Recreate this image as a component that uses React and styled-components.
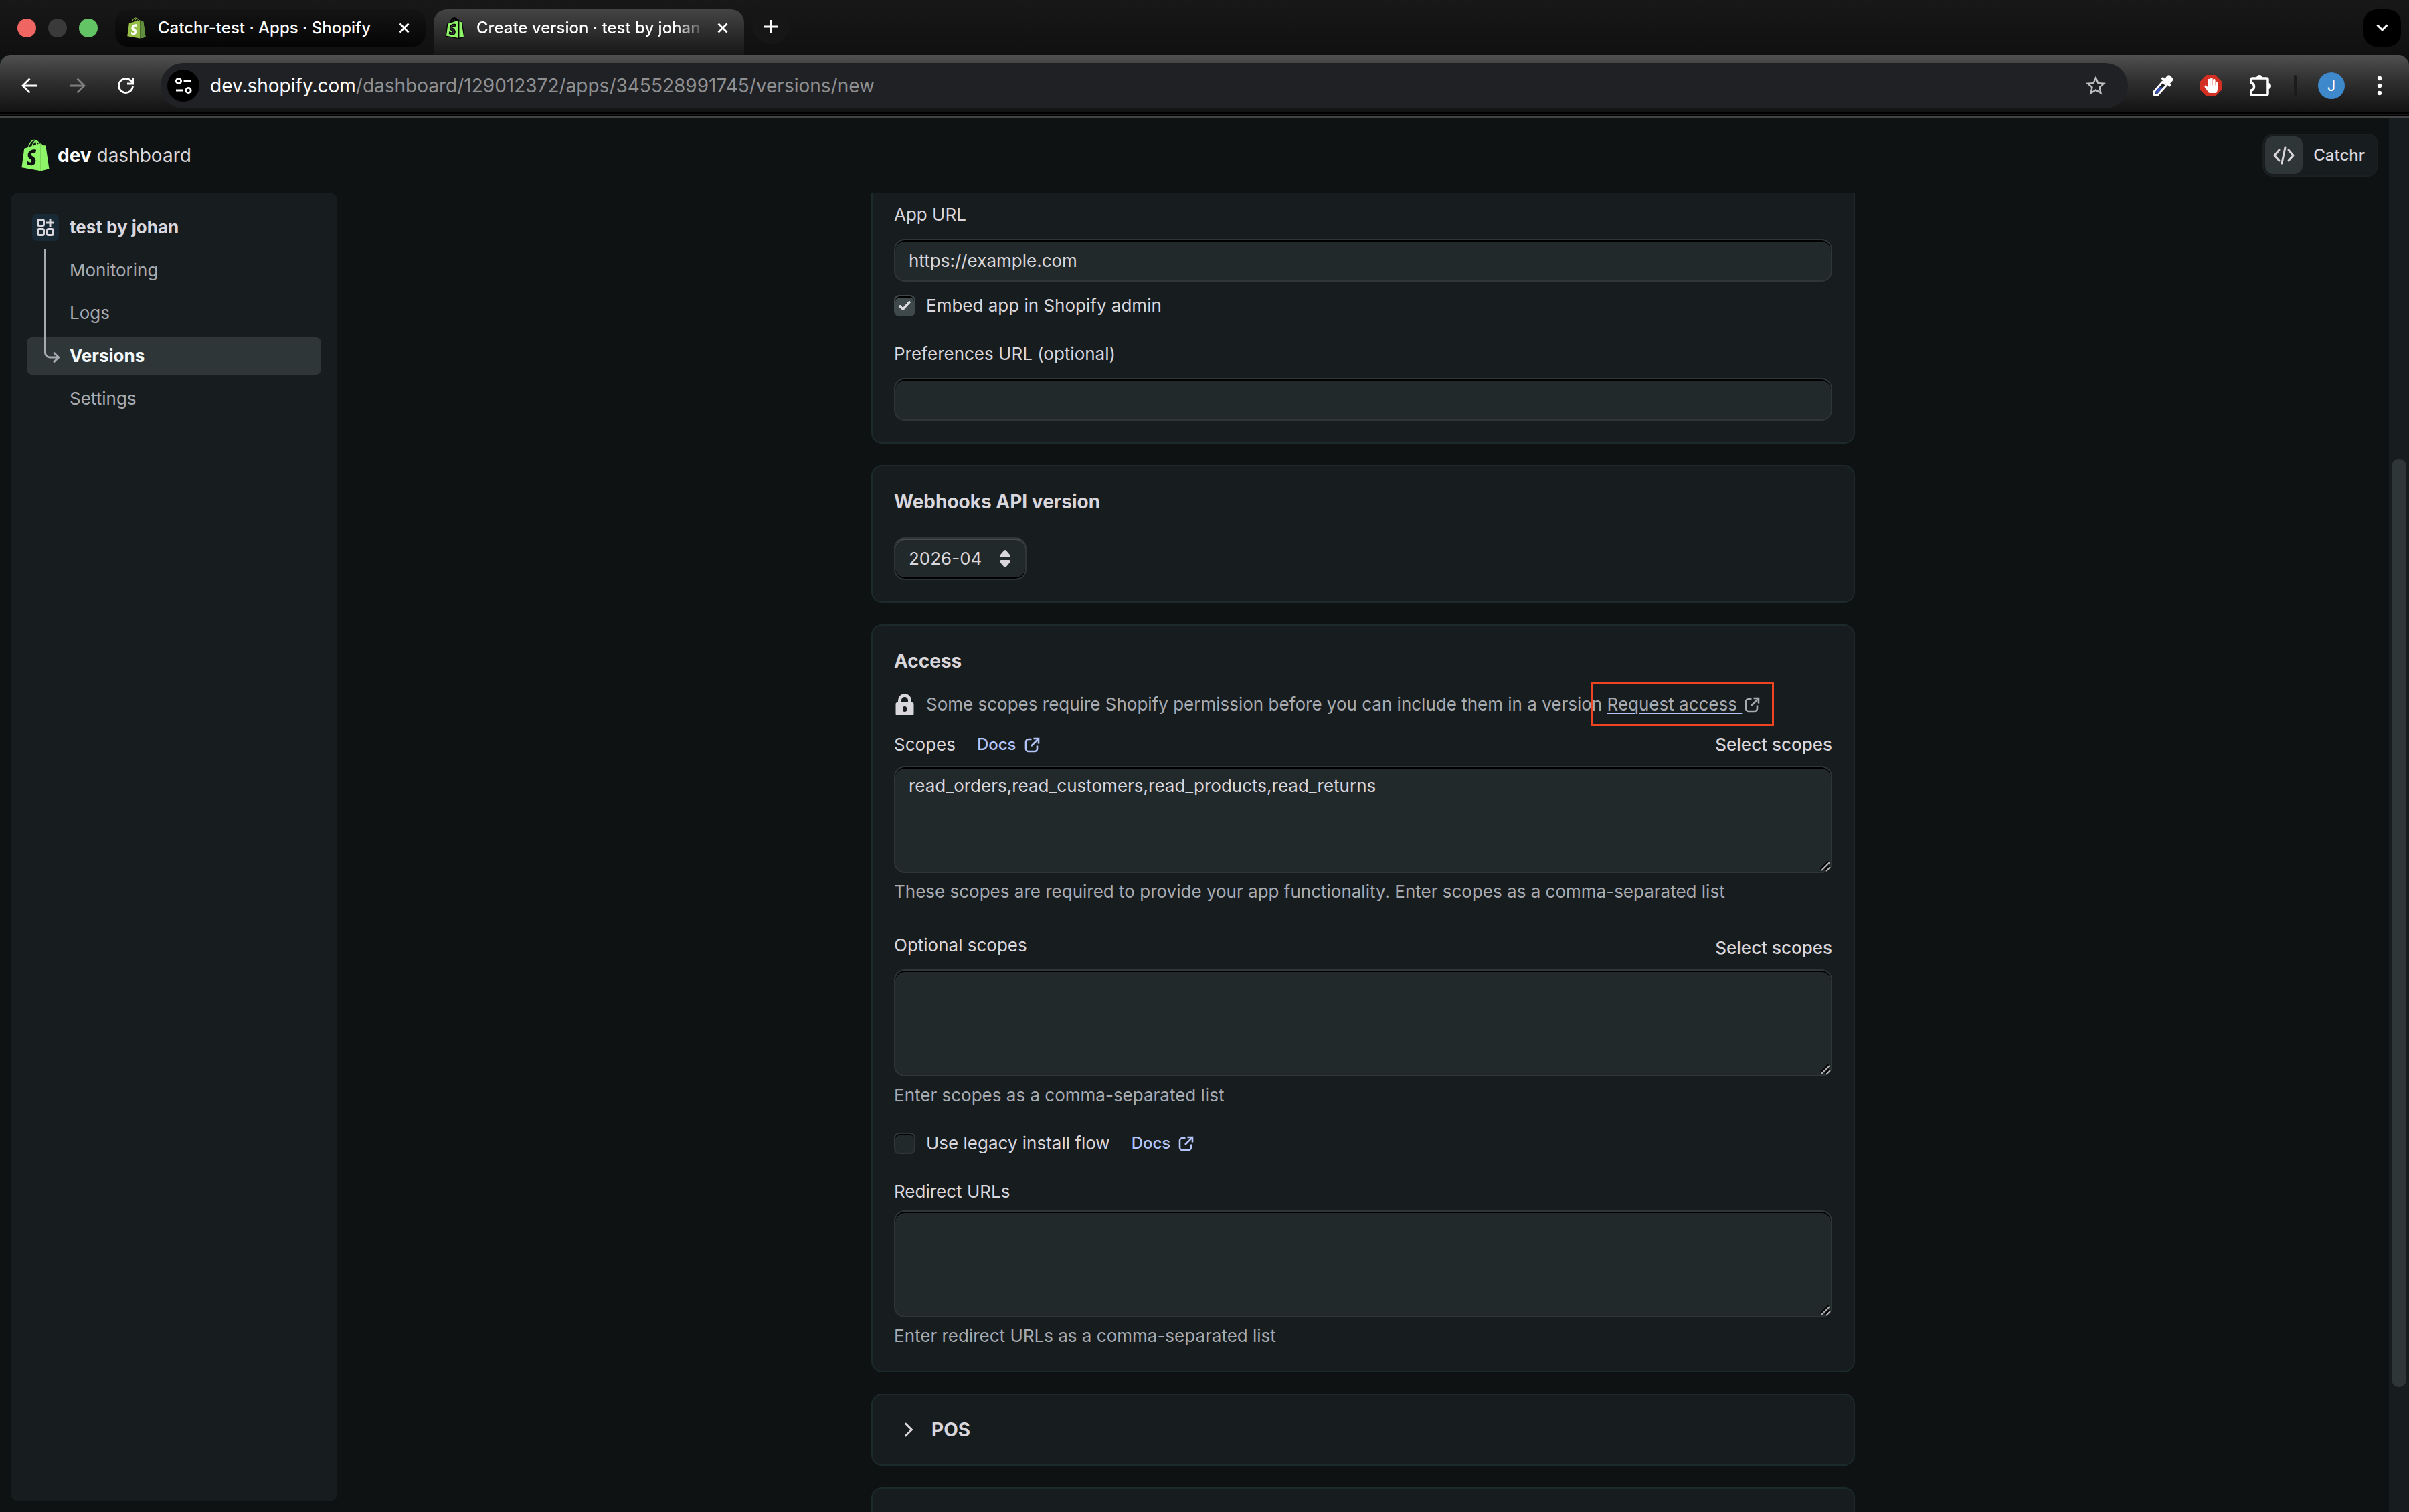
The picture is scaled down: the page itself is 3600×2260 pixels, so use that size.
import React from "react";
import styled, { createGlobalStyle, ThemeProvider } from "styled-components";
import { FaShopify, FaHandPaper } from "react-icons/fa";
import { MdStarBorder } from "react-icons/md";

const theme = {
  bg: "#0e1213",
  surface: "#171c1f",
  surfaceBorder: "#1c2a2c",
  field: "#22292b",
  fieldBorder: "#2f3638",
  active: "#2f3638",
  text: "#d9d6dc",
  textMuted: "#a7abb1",
  link: "#b4c5fb",
  brand: "#8ef468",
  highlight: "#ee4423",
};

const navItems = ["Monitoring", "Logs", "Versions", "Settings"];

function ExternalIcon() {
  return (
    <svg width="24" height="24" viewBox="0 0 24 24" fill="none" stroke="currentColor" strokeWidth="2.6" aria-hidden="true">
      <path d="M10.500 4H6a4 4 0 0 0-4 4v10a4 4 0 0 0 4 4h9a4 4 0 0 0 4-4v-4.500" />
      <path d="M13.500 3H21v7.500" />
      <path d="M21 3 10 14" />
    </svg>
  );
}

function BagIcon() {
  return (
    <svg width="28" height="32" viewBox="0 0 448 512" aria-hidden="true">
      <path d="M95 160h210v300H85z" fill="#fff" />
      <FaShopify x="-32" size={512} color="#95bf47" />
      <path
        fill="#5e8e3e"
        d="M388.32,104.1a4.66,4.66,0,0,0-4.4-4c-2,0-37.23-.8-37.23-.8s-21.61-20.82-29.62-28.83V503.2L442.76,472S388.72,106.5,388.32,104.1Z"
      />
    </svg>
  );
}

function CloseIcon() {
  return (
    <svg width="16" height="16" viewBox="0 0 16 16" fill="none" stroke="#fff" strokeWidth="2.800" aria-hidden="true">
      <path d="m1.500 1.500 13 13m0-13-13 13" />
    </svg>
  );
}

function Browser() {
  return (
    <header>
      <TabStrip>
        <Lights>
          <Light color="#ee6562" />
          <Light color="#3a3a3a" />
          <Light color="#63c466" />
        </Lights>
        <Tab>
          <BagIcon />
          <TabTitle>Catchr-test · Apps · Shopify</TabTitle>
          <TabClose aria-label="Close tab">
            <CloseIcon />
          </TabClose>
        </Tab>
        <Tab $active>
          <TabBag />
          <TabTitle $fade>Create version · test by johan</TabTitle>
          <TabClose aria-label="Close tab">
            <CloseIcon />
          </TabClose>
        </Tab>
        <NewTab aria-label="New tab">
          <svg width="20" height="20" viewBox="0 0 20 20" stroke="#fff" strokeWidth="3">
            <path d="M10 0v20M0 10h20" />
          </svg>
        </NewTab>
        <TabSearch aria-label="Search tabs">
          <svg width="18" height="12" viewBox="0 0 18 12" fill="none" stroke="#fff" strokeWidth="3">
            <path d="m1.500 1.500 7.500 7.500 7.500-7.500" />
          </svg>
        </TabSearch>
      </TabStrip>
      <Toolbar>
        <ToolButton aria-label="Back">
          <svg width="24" height="24" viewBox="0 0 24 24" fill="none" stroke="#fff" strokeWidth="2.800">
            <path d="M24 12H2M12.500 1.500 2 12l10.500 10.500" />
          </svg>
        </ToolButton>
        <ToolButton aria-label="Forward">
          <svg width="24" height="24" viewBox="0 0 24 24" fill="none" stroke="#7e7e7e" strokeWidth="2.800">
            <path d="M0 12h22M11.500 1.500 22 12 11.500 22.500" />
          </svg>
        </ToolButton>
        <ToolButton aria-label="Reload">
          <svg width="26" height="26" viewBox="0 0 26 26" fill="none" stroke="#fff" strokeWidth="2.800">
            <path d="M23.500 13a10.500 10.500 0 1 1-3-7.400L23.500 9" />
            <path d="M23.600 1v9H15" />
          </svg>
        </ToolButton>
        <AddressBar>
          <SiteInfo aria-label="View site information">
            <svg width="26" height="26" viewBox="0 0 26 26" fill="none" stroke="#fff" strokeWidth="2.800">
              <circle cx="6" cy="6" r="3.700" />
              <path d="M13.500 6H25M2 20h11" />
              <circle cx="20.500" cy="20" r="3.700" />
            </svg>
          </SiteInfo>
          <Url>
            <span>dev.shopify.com</span>/dashboard/129012372/apps/345528991745/versions/new
          </Url>
          <MdStarBorder size={36} color="#bdbdbd" />
        </AddressBar>
        <Extensions>
          <ToolButton aria-label="Color picker">
            <svg width="32" height="32" viewBox="0 0 32 32">
              <path d="M2.500 25.500 16 10l5.500 5.500L8.500 30H3.500z" fill="#222" stroke="#fff" strokeWidth="3" strokeLinejoin="round" />
              <path d="m5 26 5.500-7.500h6L8 27.500l-2 .5z" fill="#3b55c4" />
              <path d="m13 5 3.500-2 2.500 2.500L22.500 1.500c2-2 4-1.500 6 .5l2.500 3.500c1 2 0 3-1 4L27 12.500l2 2-3 3.500z" fill="#fff" />
            </svg>
          </ToolButton>
          <ToolButton aria-label="Ad blocker">
            <svg width="32" height="32" viewBox="0 0 32 32">
              <path d="M9.500 0h13L32 9.500v13L22.500 32h-13L0 22.500v-13z" fill="#d32f22" />
              <FaHandPaper x="5" y="4" size={23} color="#fff" />
            </svg>
          </ToolButton>
          <ToolButton aria-label="Extensions">
            <svg width="36" height="36" viewBox="0 0 36 36">
              <path
                d="M8 7h21a2 2 0 0 1 2 2v21a2 2 0 0 1-2 2H8a2 2 0 0 1-2-2v-5c6-1 6-10 0-11V9a2 2 0 0 1 2-2z"
                fill="none"
                stroke="#fff"
                strokeWidth="3.500"
              />
              <path d="M14 6.500a4.500 4.500 0 0 1 9 0zM31.500 14a4.500 4.500 0 0 1 0 9z" fill="#fff" />
            </svg>
          </ToolButton>
          <Separator />
          <ToolButton aria-label="Profile">
            <Avatar>J</Avatar>
          </ToolButton>
          <ToolButton aria-label="Menu">
            <svg width="8" height="30" viewBox="0 0 8 30" fill="#fff">
              <circle cx="4" cy="4" r="3.200" />
              <circle cx="4" cy="15" r="3.200" />
              <circle cx="4" cy="26" r="3.200" />
            </svg>
          </ToolButton>
        </Extensions>
      </Toolbar>
      <ToolbarEdge />
    </header>
  );
}

function Sidebar() {
  return (
    <SidebarStyled>
      <NavLink href="#app" $root>
        <AppIcon>
          <svg width="26" height="26" viewBox="0 0 26 26" fill="none" stroke="currentColor" strokeWidth="3">
            <rect x="1.500" y="1.500" width="9" height="9" rx="2" />
            <rect x="1.500" y="15.500" width="9" height="9" rx="2" />
            <rect x="15.500" y="15.500" width="9" height="9" rx="2" />
            <path d="M20 0v12M14 6h12" />
          </svg>
        </AppIcon>
        test by johan
      </NavLink>
      {navItems.map((item) => (
        <NavLink key={item} href={"#" + item.toLowerCase()} $active={item === "Versions"}>
          {item}
        </NavLink>
      ))}
      <Branch width="26" height="172" viewBox="0 0 26 172" fill="none">
        <path d="M3.500 0v155a7 7 0 0 0 7 7h13" />
        <path d="m17 155.500 6.500 6.500-6.500 6.500" />
      </Branch>
    </SidebarStyled>
  );
}

function DocsLink() {
  return (
    <Docs href="#docs">
      Docs
      <ExternalIcon />
    </Docs>
  );
}

function ScopeArea({ id, value, help }) {
  return (
    <>
      <AreaWrap>
        <TextArea id={id} defaultValue={value} aria-describedby={id + "-help"} />
        <Grip width="16" height="16" viewBox="0 0 16 16" fill="none">
          <path d="M1 13 13 1M8 14l6-6" stroke="#000" strokeWidth="4" />
          <path d="M2 14 14 2M9 15l6-6" stroke="#b5b5b5" strokeWidth="2" />
        </Grip>
      </AreaWrap>
      <Help id={id + "-help"}>{help}</Help>
    </>
  );
}

function VersionForm() {
  return (
    <Form>
      <Card $clipped>
        <Label htmlFor="app-url">App URL</Label>
        <TextInput id="app-url" type="text" defaultValue="https://example.com" />
        <CheckRow>
          <Checkbox id="embed" type="checkbox" defaultChecked />
          <Label htmlFor="embed">Embed app in Shopify admin</Label>
        </CheckRow>
        <FieldBlock>
          <Label htmlFor="preferences-url">Preferences URL (optional)</Label>
          <TextInput id="preferences-url" type="text" />
        </FieldBlock>
      </Card>

      <Card>
        <CardTitle id="webhooks-title">Webhooks API version</CardTitle>
        <SelectWrap>
          <Select aria-labelledby="webhooks-title" defaultValue="2026-04">
            <option>2026-04</option>
          </Select>
          <svg width="16" height="26" viewBox="0 0 16 26" fill="currentColor" aria-hidden="true">
            <path d="M6.700.6a2 2 0 0 1 2.600 0l6 7c1.100 1.300.3 3.400-1 3.400H1.700C.4 11-.4 8.900.7 7.600zM6.700 25.400a2 2 0 0 0 2.600 0l6-7c1.100-1.300.3-3.400-1-3.400H1.700C.4 15-.4 17.100.7 18.400z" />
          </svg>
        </SelectWrap>
      </Card>

      <Card>
        <CardTitle>Access</CardTitle>
        <Notice>
          <svg width="32" height="32" viewBox="0 0 32 32" fill={theme.text} aria-hidden="true">
            <path
              fillRule="evenodd"
              d="M16 0a10 10 0 0 0-10 10v3h-1a2.500 2.500 0 0 0-2.500 2.500v14A2.500 2.500 0 0 0 5 32h22a2.500 2.500 0 0 0 2.500-2.500v-14A2.500 2.500 0 0 0 27 13h-1v-3A10 10 0 0 0 16 0zm-5 13v-3a5 5 0 0 1 10 0v3zm5 6a3 3 0 0 1 3 3v2a3 3 0 0 1-6 0v-2a3 3 0 0 1 3-3z"
            />
          </svg>
          <p>
            Some scopes require Shopify permission before you can include them in a version{" "}
            <RequestAccess>
              <a href="#request">Request access&nbsp;</a>
              <ExternalIcon />
            </RequestAccess>
          </p>
        </Notice>
        <ScopeHeader>
          <LabelGroup>
            <Label htmlFor="scopes">Scopes</Label>
            <DocsLink />
          </LabelGroup>
          <PlainButton type="button">Select scopes</PlainButton>
        </ScopeHeader>
        <ScopeArea
          id="scopes"
          value="read_orders,read_customers,read_products,read_returns"
          help="These scopes are required to provide your app functionality. Enter scopes as a comma-separated list"
        />
        <ScopeHeader $spaced>
          <Label htmlFor="optional-scopes" $tight>
            Optional scopes
          </Label>
          <PlainButton type="button">Select scopes</PlainButton>
        </ScopeHeader>
        <ScopeArea id="optional-scopes" help="Enter scopes as a comma-separated list" />
        <FieldBlock>
          <LabelGroup>
            <CheckGroup>
              <Checkbox id="legacy" type="checkbox" />
              <Label htmlFor="legacy">Use legacy install flow</Label>
            </CheckGroup>
            <DocsLink />
          </LabelGroup>
        </FieldBlock>
        <FieldBlock $gap={8}>
          <Label htmlFor="redirect-urls">Redirect URLs</Label>
          <div>
            <ScopeArea id="redirect-urls" help="Enter redirect URLs as a comma-separated list" />
          </div>
        </FieldBlock>
      </Card>

      <Card $compact>
        <Disclosure type="button" aria-expanded="false">
          <svg width="12" height="22" viewBox="0 0 12 22" fill="none" stroke="currentColor" strokeWidth="3" strokeLinecap="round" strokeLinejoin="round">
            <path d="m1.500 2 9 9-9 9" />
          </svg>
          POS
        </Disclosure>
      </Card>
      <Card $compact />
    </Form>
  );
}

function App() {
  return (
    <ThemeProvider theme={theme}>
      <GlobalStyle />
      <Window>
        <Browser />
        <Page>
          <Dashboard>
            <TopBar>
              <Brand href="#home">
                <BrandBag />
                <span>
                  <b>dev</b> dashboard
                </span>
              </Brand>
              <OrgButton type="button">
                <OrgIcon>
                  <svg width="32" height="28" viewBox="0 0 32 28" fill="none" stroke="currentColor" strokeWidth="3" strokeLinecap="round" strokeLinejoin="round">
                    <path d="m9 6-7 8 7 8M23 6l7 8-7 8M18 2l-5 24" />
                  </svg>
                </OrgIcon>
                Catchr
              </OrgButton>
            </TopBar>
            <Content>
              <Sidebar />
              <Main>
                <VersionForm />
              </Main>
            </Content>
          </Dashboard>
          <ScrollTrack>
            <ScrollThumb />
          </ScrollTrack>
        </Page>
      </Window>
    </ThemeProvider>
  );
}

const GlobalStyle = createGlobalStyle`
  *, *::before, *::after {
    box-sizing: border-box;
  }
  body {
    margin: 0;
    background: ${theme.bg};
    color: ${theme.text};
    font: 400 26px/40px Inter, "Liberation Sans", sans-serif;
    -webkit-font-smoothing: antialiased;
  }
  h2, p {
    margin: 0;
  }
  button, input, select, textarea {
    font: inherit;
    color: inherit;
  }
  button {
    border: 0;
    padding: 0;
    background: none;
  }
  a {
    color: inherit;
    text-decoration: none;
  }
  svg {
    flex: none;
  }
`;

const Window = styled.div`
  display: flex;
  flex-direction: column;
  height: 100vh;
  overflow: hidden;
`;

/* browser chrome */

const TabStrip = styled.div`
  display: flex;
  align-items: flex-start;
  height: 82px;
  padding: 14px 12px 0 26px;
  background: linear-gradient(#181818, #101010);
`;

const Lights = styled.div`
  display: flex;
  align-items: center;
  gap: 18px;
  height: 56px;
  margin-right: 26px;
`;

const Light = styled.span`
  width: 28px;
  height: 28px;
  border-radius: 50%;
  background: ${(props) => props.color};
`;

const Tab = styled.div`
  display: flex;
  align-items: center;
  width: 464px;
  height: ${(props) => (props.$active ? "68px" : "56px")};
  padding: ${(props) => (props.$active ? "0 24px 12px 18px" : "0 24px 0 18px")};
  margin-right: 12px;
  border-radius: ${(props) => (props.$active ? "20px 20px 0 0" : "20px")};
  background: ${(props) =>
    props.$active
      ? "linear-gradient(#444444, #171717)"
      : "linear-gradient(#141414, #050505)"};
`;

const TabBag = styled(FaShopify)`
  width: 28px;
  height: 32px;
  flex: none;
  color: ${(props) => props.theme.brand};
  stroke: #000;
  stroke-width: 20;
  overflow: visible;
`;

const TabTitle = styled.span`
  flex: 1;
  margin: 0 16px 0 18px;
  color: #fff;
  font-size: 24px;
  font-weight: 450;
  line-height: 32px;
  white-space: nowrap;
  ${(props) =>
    props.$fade &&
    "mask-image: linear-gradient(90deg, #000 86%, transparent);"}
`;

const TabClose = styled.button`
  display: flex;
`;

const NewTab = styled.button`
  display: flex;
  align-items: center;
  justify-content: center;
  width: 56px;
  height: 52px;
  border-radius: 50%;
  background: #161616;
`;

const TabSearch = styled.button`
  display: flex;
  align-items: center;
  justify-content: center;
  width: 56px;
  height: 56px;
  margin-left: auto;
  border-radius: 20px;
  background: #000;
`;

const Toolbar = styled.div`
  display: flex;
  align-items: center;
  height: 86px;
  padding: 12px 8px 6px;
  border-radius: 16px 16px 0 0;
  background: linear-gradient(#505050, #333333 40%, #121212);
`;

const ToolButton = styled.button`
  display: flex;
  align-items: center;
  justify-content: center;
  width: 72px;
  height: 68px;
`;

const AddressBar = styled.div`
  display: flex;
  align-items: center;
  flex: 1;
  gap: 16px;
  height: 68px;
  margin: 0 16px;
  padding: 0 30px 0 10px;
  border-radius: 34px;
  background: #202125;
`;

const SiteInfo = styled.button`
  display: flex;
  align-items: center;
  justify-content: center;
  width: 48px;
  height: 48px;
  border-radius: 50%;
  background: #000;
`;

const Url = styled.span`
  flex: 1;
  color: #8f9092;
  font-size: 28px;
  font-weight: 400;
  span {
    color: #fff;
  }
`;

const Extensions = styled.div`
  display: flex;
  align-items: center;
`;

const Separator = styled.span`
  width: 4px;
  height: 32px;
  margin: 0 16px;
  border-radius: 2px;
  background: #1b1b1b;
`;

const Avatar = styled.span`
  width: 40px;
  height: 40px;
  border-radius: 50%;
  background: #3e88cc;
  color: #fff;
  font-size: 22px;
`;

const ToolbarEdge = styled.div`
  height: 8px;
  background: linear-gradient(
    #000 2px,
    #1a1a1a 2px 4px,
    #000 4px 6px,
    #444 6px
  );
`;

/* dashboard */

const Page = styled.div`
  display: flex;
  flex: 1;
  min-height: 0;
`;

const Dashboard = styled.div`
  display: flex;
  flex-direction: column;
  flex: 1;
  min-width: 0;
`;

const TopBar = styled.div`
  display: flex;
  align-items: center;
  justify-content: space-between;
  height: 112px;
  padding: 0 16px 0 32px;
`;

const Brand = styled.a`
  display: flex;
  align-items: center;
  gap: 12px;
  font-size: 28px;
  b {
    color: #fff;
    font-weight: 700;
  }
`;

const BrandBag = styled(FaShopify)`
  width: 42px;
  height: 48px;
  color: ${(props) => props.theme.brand};
`;

const OrgButton = styled.button`
  display: flex;
  align-items: center;
  gap: 16px;
  padding: 2px 18px 2px 2px;
  border: 2px solid #1b1f22;
  border-radius: 16px;
  background: ${(props) => props.theme.surface};
  font-size: 24px;
  font-weight: 500;
`;

const OrgIcon = styled.span`
  display: flex;
  align-items: center;
  justify-content: center;
  width: 56px;
  height: 56px;
  border-radius: 12px;
  background: ${(props) => props.theme.active};
`;

const Content = styled.div`
  display: flex;
  flex: 1;
  min-height: 0;
`;

const SidebarStyled = styled.nav`
  position: relative;
  display: flex;
  flex-direction: column;
  gap: 8px;
  width: 488px;
  flex: none;
  margin: 0 0 16px 16px;
  padding: 24px;
  border-radius: 12px;
  background: ${(props) => props.theme.surface};
`;

const NavLink = styled.a`
  display: flex;
  align-items: center;
  gap: 16px;
  height: 56px;
  padding-left: ${(props) => (props.$root ? "8px" : "64px")};
  border-radius: 8px;
  background: ${(props) => (props.$active ? props.theme.active : "none")};
  color: ${(props) =>
    props.$active
      ? "#f4f9fb"
      : props.$root
      ? props.theme.text
      : props.theme.textMuted};
  font-weight: ${(props) => (props.$active || props.$root ? 650 : 400)};
`;

const AppIcon = styled.span`
  display: flex;
  align-items: center;
  justify-content: center;
  width: 40px;
  height: 40px;
  border-radius: 8px;
  background: #182a35;
`;

/* connector from the app down to the current section */
const Branch = styled.svg`
  position: absolute;
  top: 84px;
  left: 48px;
  stroke: ${(props) => props.theme.textMuted};
  stroke-width: 3;
  stroke-linecap: round;
  pointer-events: none;
`;

const Main = styled.main`
  flex: 1;
  min-width: 0;
  overflow: hidden;
`;

const Form = styled.form`
  display: flex;
  flex-direction: column;
  gap: 32px;
  max-width: 1470px;
  margin: 0 auto;
`;

const Card = styled.section`
  display: flex;
  flex-direction: column;
  min-height: 108px;
  padding: ${(props) =>
    props.$clipped ? "13px 32px 32px" : props.$compact ? "0 32px" : "32px"};
  border: 2px solid ${(props) => props.theme.surfaceBorder};
  border-top-width: ${(props) => (props.$clipped ? 0 : "2px")};
  border-radius: ${(props) => (props.$clipped ? "0 0 16px 16px" : "16px")};
  background: ${(props) => props.theme.surface};
`;

const CardTitle = styled.h2`
  font-size: 28px;
  font-weight: 700;
  line-height: 42px;
`;

const Label = styled.label`
  line-height: ${(props) => (props.$tight ? "32px" : "40px")};
`;

const TextInput = styled.input`
  display: block;
  width: 100%;
  height: 64px;
  padding: 0 20px;
  border: 2px solid ${(props) => props.theme.fieldBorder};
  border-radius: 16px;
  outline: 0;
  background: ${(props) => props.theme.field};
  box-shadow: inset 0 2px 0 #000;
  ${Label} + & {
    margin-top: 16px;
  }
`;

const FieldBlock = styled.div`
  display: flex;
  flex-direction: column;
  gap: ${(props) => props.$gap || 0}px;
  margin-top: 32px;
`;

const CheckGroup = styled.div`
  display: flex;
  align-items: center;
  gap: 16px;
`;

const CheckRow = styled(CheckGroup)`
  margin-top: 16px;
`;

const Checkbox = styled.input`
  appearance: none;
  display: grid;
  place-items: center;
  width: 32px;
  height: 32px;
  margin: 0;
  border: 2px solid ${(props) => props.theme.fieldBorder};
  border-radius: 8px;
  background: ${(props) => props.theme.field};
  box-shadow: inset 0 2px 0 #000;
  &:checked {
    border-color: #3f484a;
    background: #3f484a;
  }
  &:checked::after {
    content: "";
    width: 10px;
    height: 18px;
    margin-bottom: 4px;
    border: solid ${(props) => props.theme.text};
    border-width: 0 4px 4px 0;
    border-radius: 1px;
    transform: rotate(42deg);
  }
`;

const SelectWrap = styled.div`
  position: relative;
  align-self: flex-start;
  margin-top: 32px;
  svg {
    position: absolute;
    top: 19px;
    right: 24px;
    pointer-events: none;
  }
`;

const Select = styled.select`
  appearance: none;
  display: block;
  height: 64px;
  padding: 0 64px 0 20px;
  border: 2px solid ${(props) => props.theme.fieldBorder};
  border-radius: 16px;
  background: ${(props) => props.theme.field};
  box-shadow: inset 0 2px 0 #474d4f, inset 0 -2px 0 #000;
`;

const Notice = styled.div`
  display: flex;
  align-items: center;
  gap: 16px;
  margin-top: 24px;
  color: ${(props) => props.theme.textMuted};
  white-space: nowrap;
`;

const RequestAccess = styled.span`
  position: relative;
  a {
    text-decoration: underline;
    text-decoration-color: ${(props) => props.theme.link};
    text-decoration-thickness: 2px;
    text-underline-offset: 3px;
  }
  svg {
    margin-left: 4px;
    vertical-align: -3px;
  }
  &::after {
    content: "";
    position: absolute;
    inset: -17px -20px -17px -24px;
    border: 3px solid ${(props) => props.theme.highlight};
    pointer-events: none;
  }
`;

const LabelGroup = styled.div`
  display: flex;
  align-items: center;
  gap: 32px;
`;

const ScopeHeader = styled.div`
  display: flex;
  align-items: flex-start;
  justify-content: space-between;
  margin: ${(props) => (props.$spaced ? "44px" : "20px")} 0 12px;
`;

const Docs = styled.a`
  display: flex;
  align-items: center;
  gap: 12px;
  color: ${(props) => props.theme.link};
  font-size: 24px;
  font-weight: 450;
`;

const PlainButton = styled.button`
  font-weight: 500;
`;

const AreaWrap = styled.div`
  position: relative;
`;

const TextArea = styled.textarea`
  display: block;
  width: 100%;
  height: 160px;
  padding: 8px 20px;
  border: 2px solid ${(props) => props.theme.fieldBorder};
  border-radius: 16px;
  outline: 0;
  resize: none;
  background: ${(props) => props.theme.field};
  box-shadow: inset 0 2px 0 #000;
`;

const Grip = styled.svg`
  position: absolute;
  right: 2px;
  bottom: 2px;
  pointer-events: none;
`;

const Help = styled.p`
  margin-top: 8px;
  color: ${(props) => props.theme.textMuted};
`;

const Disclosure = styled.button`
  display: flex;
  align-items: center;
  gap: 28px;
  height: 104px;
  padding-left: 16px;
  font-size: 28px;
  font-weight: 700;
`;

const ScrollTrack = styled.div`
  display: grid;
  grid-template-rows: 510fr 1387fr 187fr;
  width: 30px;
  padding: 0 4px;
  background: ${(props) => props.theme.surface};
`;

const ScrollThumb = styled.div`
  grid-row: 2;
  border-radius: 11px;
  background: ${(props) => props.theme.active};
`;

export default App;
